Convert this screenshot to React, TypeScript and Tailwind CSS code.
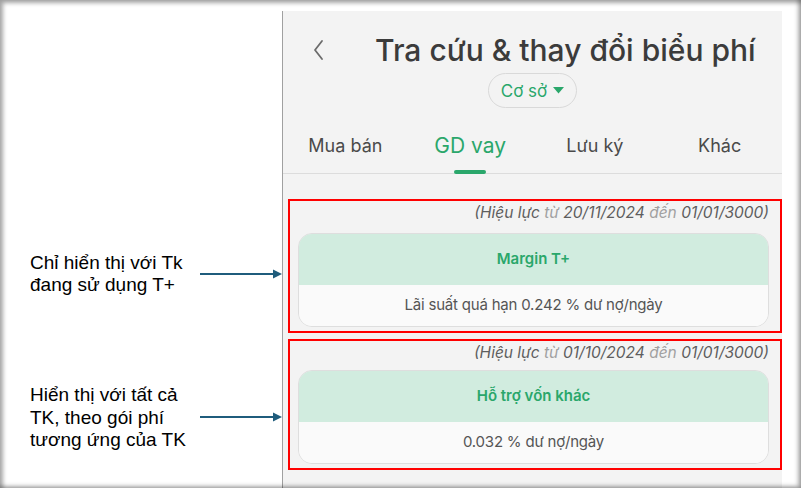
export default function App() {
  const green = "text-[#2aa76b]";
  return (
    <div className="relative w-[801px] h-[488px] overflow-hidden bg-white">
      <div className="flex h-full">
        {/* annotations */}
        <div
          className="w-[282px] shrink-0 flex flex-col pt-[252px] pl-[30px] text-black text-[19px] leading-[22px]"
          style={{ fontFamily: '"Liberation Sans", Arial, sans-serif' }}
        >
          <div className="flex items-center">
            <div className="w-[170px]">
              <div>Chỉ hiển thị với Tk</div>
              <div>đang sử dụng T+</div>
            </div>
            <Arrow />
          </div>
          <div className="flex items-center mt-[88px] leading-[22.5px]">
            <div className="w-[170px]">
              <div>Hiển thị với tất cả</div>
              <div>TK, theo gói phí</div>
              <div>tương ứng của TK</div>
            </div>
            <Arrow />
          </div>
        </div>

        {/* phone panel */}
        <div
          className="w-[500px] shrink-0 mt-[11px] border-l border-[#a0a0a0] bg-[#f3f3f3] flex flex-col"
          style={{ fontFamily: 'Inter, "Noto Sans", sans-serif' }}
        >
          <div className="flex items-center pl-[29px] pt-[21px] h-[57px]">
            <svg width="14" height="22" viewBox="0 0 14 22" fill="none">
              <path d="M10 2 L3 11 L10 20" stroke="#6b6b6b" strokeWidth="1.8" strokeLinecap="round" strokeLinejoin="round" />
            </svg>
            <div className="ml-[49px] text-[30px] leading-[36px] font-medium text-[#3b3b3b]">
              Tra cứu &amp; thay đổi biểu phí
            </div>
          </div>

          <div className="flex justify-center mt-[5px]">
            <div className="w-[89px] h-[35px] rounded-full border border-[#d9d9d9] flex items-center justify-center gap-[6px]">
              <span className={`${green} text-[17px] leading-[20px]`}>Cơ sở</span>
              <svg width="11" height="7" viewBox="0 0 11 7">
                <path d="M0 0 L11 0 L5.5 6.5 Z" fill="#2aa76b" />
              </svg>
            </div>
          </div>

          <div className="grid grid-cols-4 mt-[24px] h-[42px] border-b border-[#dcdcdc]">
            <div className="flex justify-center text-[18px] leading-[28px] text-[#4a4a4a]">Mua bán</div>
            <div className="flex flex-col items-center justify-between">
              <div className={`${green} text-[21px] leading-[28px]`}>GD vay</div>
              <div className="w-[32px] h-[4px] rounded-full bg-[#2aa76b] mb-[-1px]" />
            </div>
            <div className="flex justify-center text-[18px] leading-[28px] text-[#4a4a4a]">Lưu ký</div>
            <div className="flex justify-center text-[18px] leading-[28px] text-[#4a4a4a]">Khác</div>
          </div>

          <FeeBox
            className="mt-[25px]"
            from="20/11/2024"
            title="Margin T+"
            desc="Lãi suất quá hạn 0.242 % dư nợ/ngày"
            cardGap="mt-[10px]"
          />
          <FeeBox
            className="mt-[6px]"
            from="01/10/2024"
            title="Hỗ trợ vốn khác"
            desc="0.032 % dư nợ/ngày"
            cardGap="mt-[7px]"
          />
        </div>
      </div>
      <div className="pointer-events-none absolute inset-0 shadow-[inset_2px_2px_4px_1px_rgba(0,0,0,0.35),inset_-3px_-2px_4px_0px_rgba(0,0,0,0.3)]" />
    </div>
  );
}

function Arrow() {
  return (
    <svg width="82" height="12" viewBox="0 0 82 12" className="shrink-0 mt-[-1px]">
      <line x1="0" y1="6" x2="75" y2="6" stroke="#1f5c7c" strokeWidth="2" />
      <polygon points="73,1.5 82,6 73,10.5" fill="#1f5c7c" />
    </svg>
  );
}

function FeeBox({
  className,
  from,
  title,
  desc,
  cardGap,
}: {
  className: string;
  from: string;
  title: string;
  desc: string;
  cardGap: string;
}) {
  return (
    <div className={`${className} ml-[5px] border-2 border-[#ff0000] pt-[2px] pb-[4px] pl-[8px] pr-[11px]`}>
      <div className="text-right italic text-[15.5px] leading-[20px] text-[#5e5e5e]">
        (Hiệu lực <span className="text-[#a0a0a0]">từ</span> {from}{" "}
        <span className="text-[#a0a0a0]">đến</span> 01/01/3000)
      </div>
      <div className={`${cardGap} rounded-[14px] border border-[#dedede] overflow-hidden`}>
        <div className="h-[51px] bg-[#d1ecdf] flex items-center justify-center text-[15px] font-semibold text-[#2aa76b]">
          {title}
        </div>
        <div className="h-[41px] bg-[#fafafa] flex items-center justify-center text-[15px] tracking-[-0.2px] text-[#555555]">
          {desc}
        </div>
      </div>
    </div>
  );
}
